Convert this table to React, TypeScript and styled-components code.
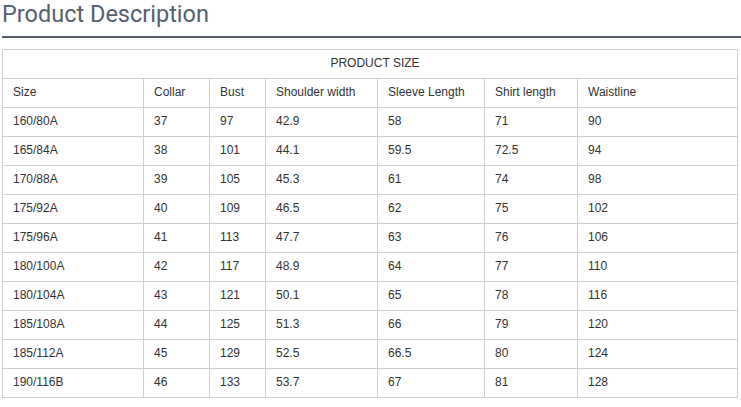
import React from "react";
import styled, { createGlobalStyle } from "styled-components";

const Global = createGlobalStyle`
  html, body { margin: 0; padding: 0; background: #fff; }
  body { font-family: "Liberation Sans", Arial, sans-serif; }
`;

const Page = styled.div`
  padding: 0 0 0 2px;
`;

const Title = styled.h2`
  margin: 0;
  font-family: Roboto, "Noto Sans", sans-serif;
  font-weight: 400;
  font-size: 23.5px;
  line-height: 28px;
  color: #55606d;
  padding-bottom: 8px;
  border-bottom: 2px solid #56606c;
`;

const Table = styled.table`
  margin-top: 11px;
  border-collapse: collapse;
  table-layout: fixed;
  width: 735px;
  font-family: "Liberation Sans", Arial, sans-serif;
  font-size: 12px;
  color: #333;
`;

const Cell = styled.td<{ $center?: boolean }>`
  border: 1px solid #cfcfcf;
  height: 29px;
  padding: 0 0 2px 10px;
  text-align: ${(p) => (p.$center ? "center" : "left")};
  vertical-align: middle;
  box-sizing: border-box;
  line-height: 14px;
`;

const widths = [141, 66, 56, 112, 107, 93, 160];
const head = ["Size", "Collar", "Bust", "Shoulder width", "Sleeve Length", "Shirt length", "Waistline"];
const rows = [
  ["160/80A", "37", "97", "42.9", "58", "71", "90"],
  ["165/84A", "38", "101", "44.1", "59.5", "72.5", "94"],
  ["170/88A", "39", "105", "45.3", "61", "74", "98"],
  ["175/92A", "40", "109", "46.5", "62", "75", "102"],
  ["175/96A", "41", "113", "47.7", "63", "76", "106"],
  ["180/100A", "42", "117", "48.9", "64", "77", "110"],
  ["180/104A", "43", "121", "50.1", "65", "78", "116"],
  ["185/108A", "44", "125", "51.3", "66", "79", "120"],
  ["185/112A", "45", "129", "52.5", "66.5", "80", "124"],
  ["190/116B", "46", "133", "53.7", "67", "81", "128"],
];

export default function App() {
  return (
    <Page>
      <Global />
      <Title>Product Description</Title>
      <Table>
        <colgroup>
          {widths.map((w, i) => (
            <col key={i} style={{ width: w }} />
          ))}
        </colgroup>
        <tbody>
          <tr>
            <Cell colSpan={7} $center>PRODUCT SIZE</Cell>
          </tr>
          <tr>
            {head.map((h) => (
              <Cell key={h}>{h}</Cell>
            ))}
          </tr>
          {rows.map((r) => (
            <tr key={r[0]}>
              {r.map((c, i) => (
                <Cell key={i}>{c}</Cell>
              ))}
            </tr>
          ))}
        </tbody>
      </Table>
    </Page>
  );
}
